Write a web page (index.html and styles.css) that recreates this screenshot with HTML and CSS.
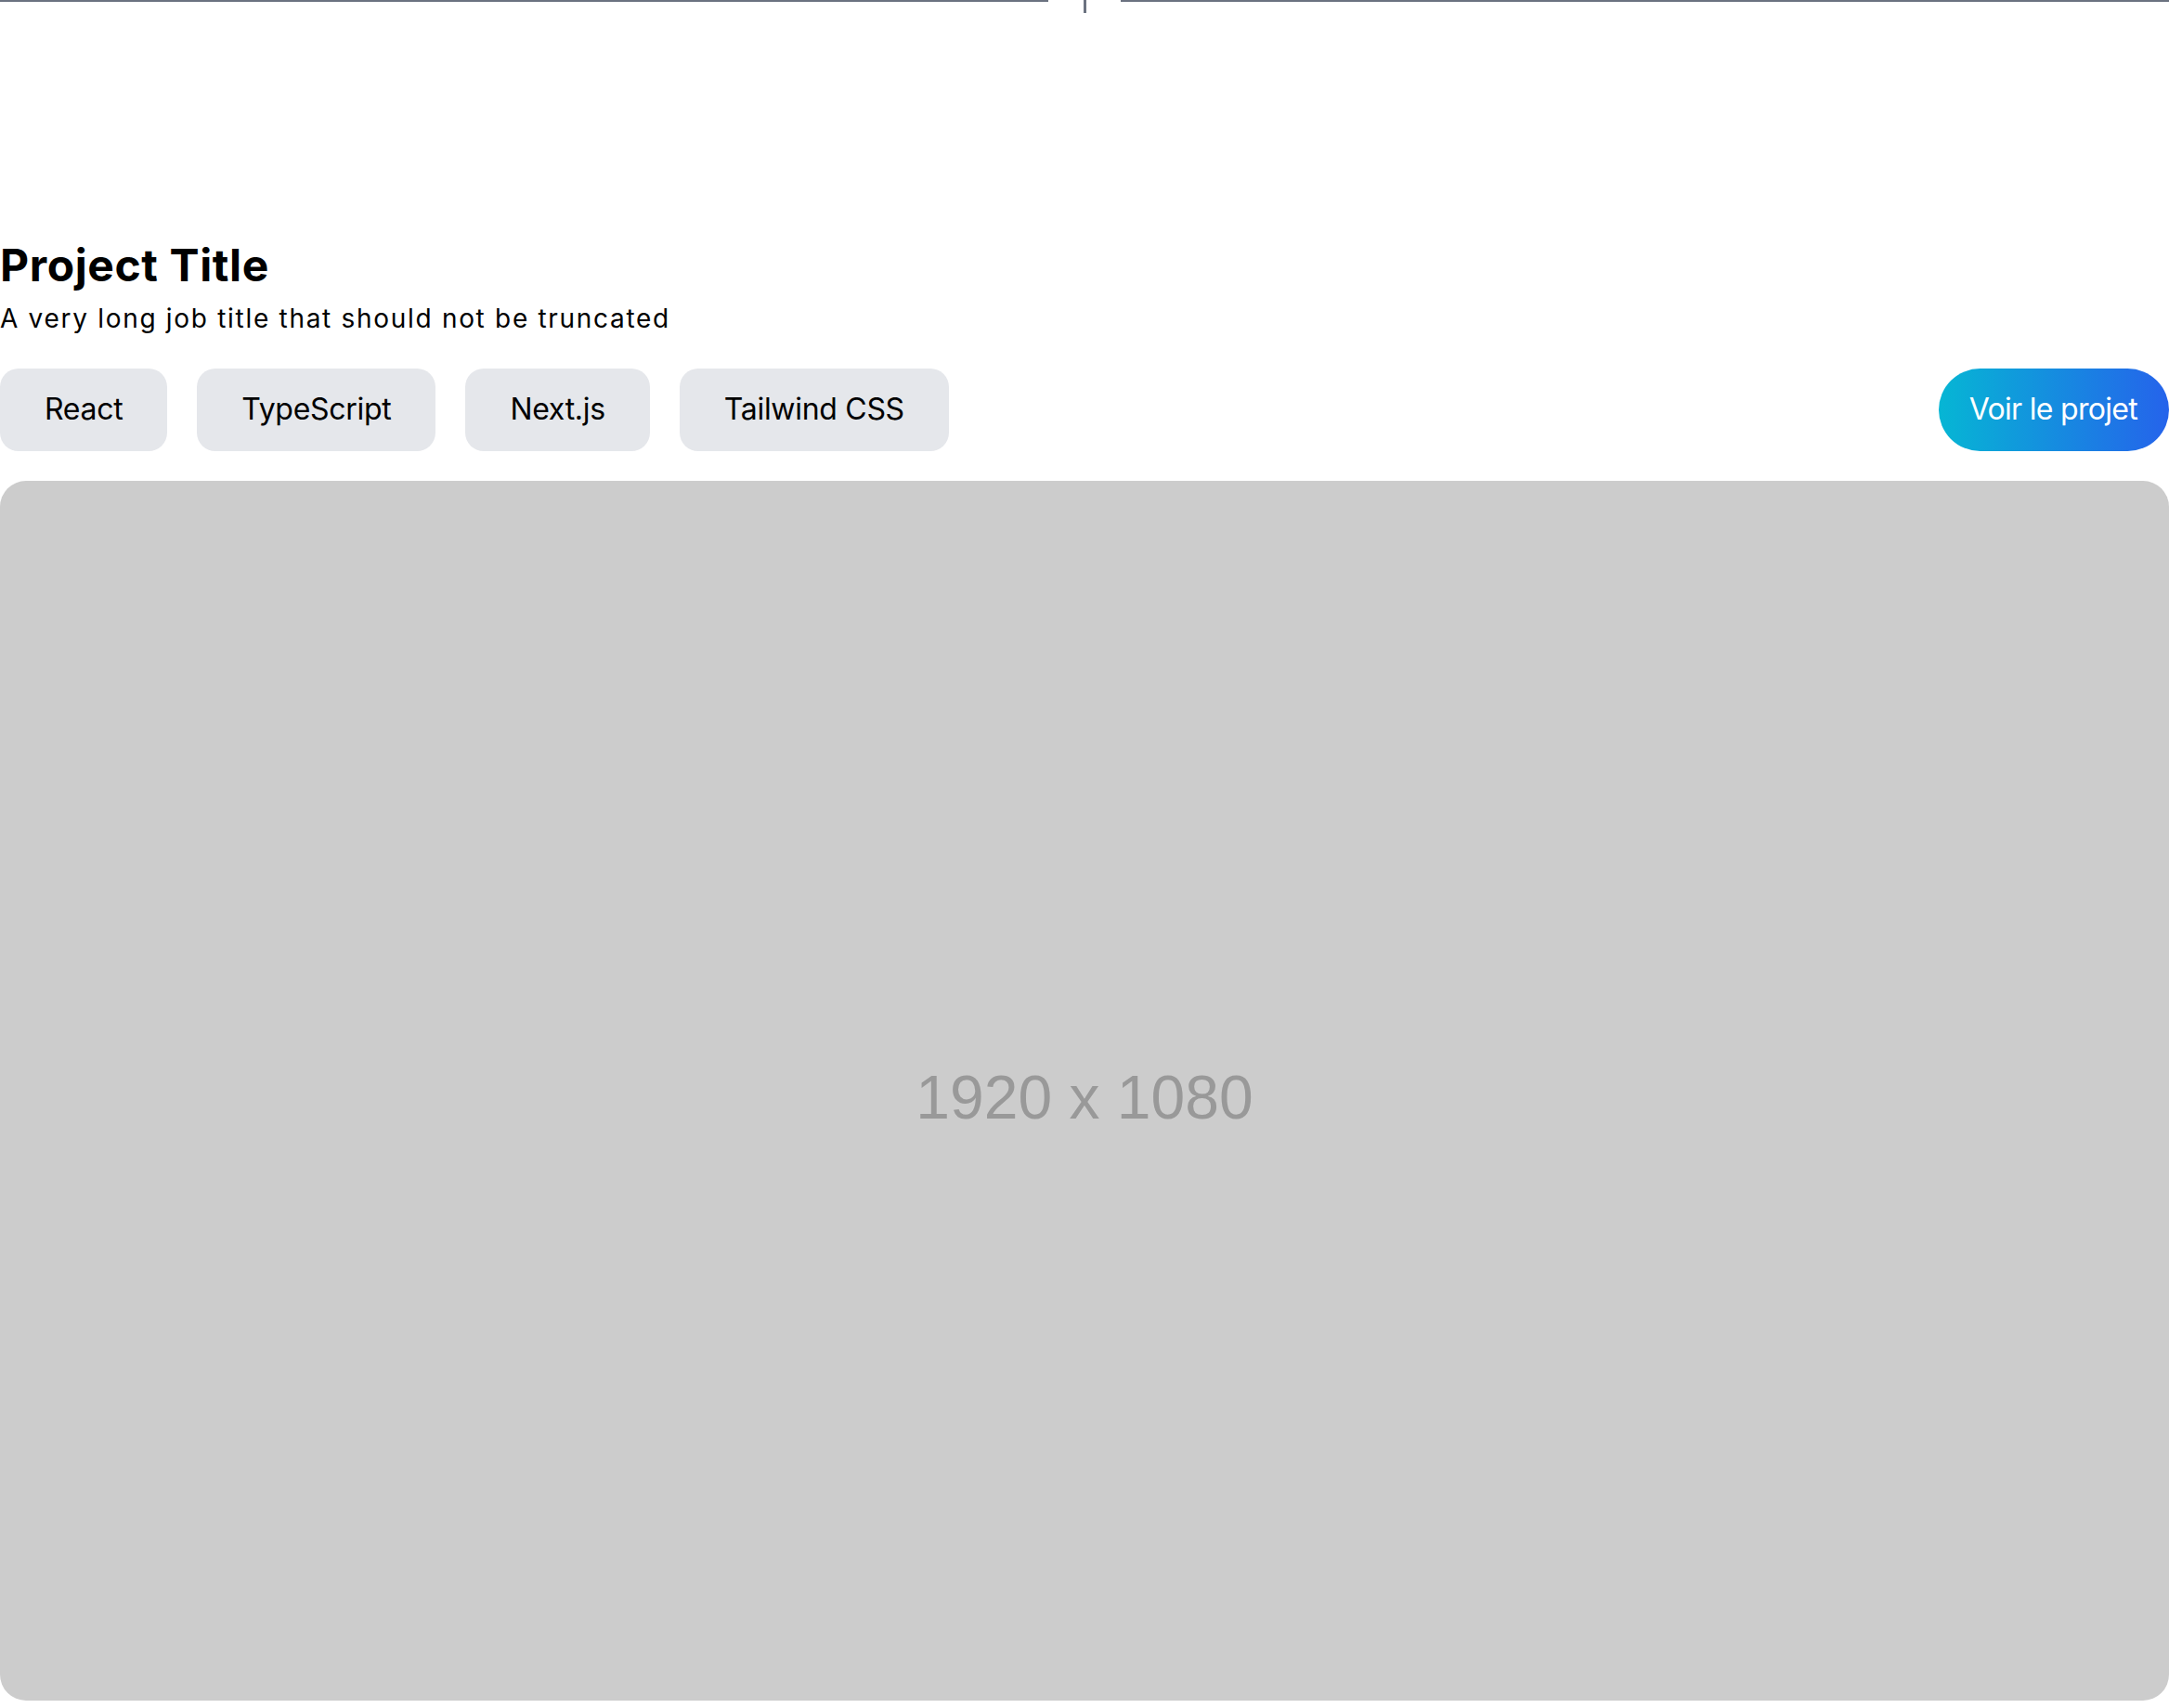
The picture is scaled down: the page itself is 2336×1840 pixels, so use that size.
FILE: index.html
```html
<!DOCTYPE html>
<html lang="fr">
<head>
<meta charset="utf-8">
<title>Project</title>
<link rel="stylesheet" href="styles.css">
</head>
<body>
  <div class="timeline">
    <div class="timeline-line"></div>
    <div class="timeline-gap"><span class="timeline-tick"></span></div>
    <div class="timeline-line"></div>
  </div>
  <main class="project">
    <h1 class="project-title">Project Title</h1>
    <p class="project-subtitle">A very long job title that should not be truncated</p>
    <div class="project-bar">
      <ul class="tags">
        <li class="tag">React</li>
        <li class="tag">TypeScript</li>
        <li class="tag">Next.js</li>
        <li class="tag">Tailwind CSS</li>
      </ul>
      <a class="project-link" href="#">Voir le projet</a>
    </div>
    <div class="project-image"><span class="placeholder-text">1920 x 1080</span></div>
  </main>
</body>
</html>
```
FILE: styles.css
```css
html, body {
  margin: 0;
  padding: 0;
  background: #ffffff;
}

body {
  font-family: Inter, "Noto Sans", sans-serif;
  color: #000000;
}

.timeline {
  display: flex;
  align-items: flex-start;
  height: 14px;
}

.timeline-line {
  flex: 1;
  height: 2px;
  background: #6b7280;
}

.timeline-gap {
  width: 78px;
  display: flex;
  justify-content: center;
}

.timeline-tick {
  display: block;
  width: 3px;
  height: 14px;
  background: #6b7280;
}

.project {
  padding-top: 236px;
}

.project-title {
  margin: 0;
  font-size: 48px;
  line-height: 72px;
  font-weight: 700;
  letter-spacing: 0.6px;
}

.project-subtitle {
  margin: 0;
  font-size: 28px;
  line-height: 42px;
  font-weight: 400;
  letter-spacing: 1.7px;
}

.project-bar {
  margin-top: 33px;
  display: flex;
  justify-content: space-between;
  align-items: center;
}

.tags {
  list-style: none;
  margin: 0;
  padding: 0;
  display: flex;
  gap: 32px;
}

.tag {
  background: #e5e7eb;
  border-radius: 20px;
  padding: 20px 48px 21px;
  font-size: 32px;
  line-height: 48px;
  letter-spacing: -0.3px;
}

.project-link {
  display: block;
  padding: 20px 34px 21px 33px;
  border-radius: 9999px;
  background: linear-gradient(to right, #06b6d4, #2563eb);
  color: #ffffff;
  text-decoration: none;
  font-size: 32px;
  line-height: 48px;
  letter-spacing: -0.7px;
}

.project-image {
  margin-top: 32px;
  aspect-ratio: 1920 / 1080;
  background: #cccccc;
  border-radius: 28px;
  display: flex;
  align-items: center;
  justify-content: center;
}

.placeholder-text {
  padding-top: 14px;
  font-family: "Liberation Sans", Arial, sans-serif;
  font-size: 66px;
  line-height: 1;
  color: #999999;
}
```
